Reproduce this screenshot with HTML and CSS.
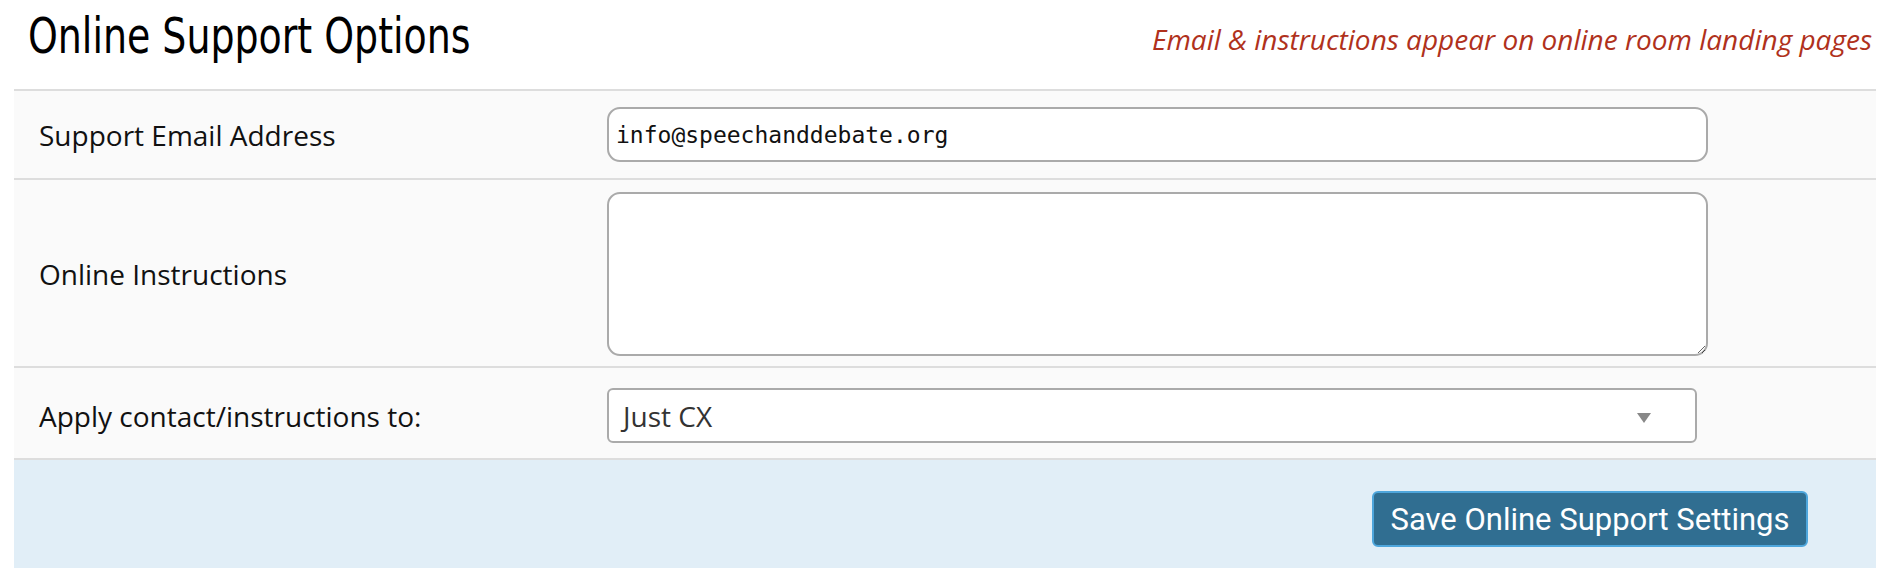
FILE: index.html
```html
<!DOCTYPE html>
<html>
<head>
<meta charset="utf-8">
<link rel="stylesheet" href="styles.css">
</head>
<body>
<div class="page">
  <div class="header">
    <h2 class="title">Online Support Options</h2>
    <span class="note">Email &amp; instructions appear on online room landing pages</span>
  </div>
  <div class="rows">
    <div class="row row-email">
      <label class="label">Support Email Address</label>
      <div class="field"><input class="text-input" type="text" value="info@speechanddebate.org"></div>
    </div>
    <div class="row row-instr">
      <label class="label">Online Instructions</label>
      <div class="field"><textarea class="textarea"></textarea></div>
    </div>
    <div class="row row-apply">
      <label class="label">Apply contact/instructions to:</label>
      <div class="field">
        <div class="select">
          <span class="select-value">Just CX</span>
          <span class="caret"></span>
        </div>
      </div>
    </div>
  </div>
  <div class="actions">
    <button class="save-btn" type="button">Save Online Support Settings</button>
  </div>
</div>
</body>
</html>
```

FILE: styles.css
```css
html, body {
  margin: 0;
  padding: 0;
  background: #ffffff;
}

.page {
  margin: 0 18px 0 14px;
  height: 568px;
  display: flex;
  flex-direction: column;
}

.header {
  display: flex;
  justify-content: space-between;
  align-items: baseline;
  height: 89px;
  padding: 0 4px 0 14px;
  box-sizing: border-box;
}

.title {
  margin: 0;
  font-family: "DejaVu Sans Condensed", "Roboto", sans-serif;
  font-weight: normal;
  font-size: 49px;
  line-height: 74px;
  color: #000;
  transform: scaleX(0.86);
  transform-origin: left center;
  white-space: nowrap;
}

.note {
  font-family: "Open Sans", sans-serif;
  font-style: italic;
  font-size: 28px;
  color: #b0311c;
  position: relative;
  top: -3px;
}

.rows {
  border-top: 2px solid #dddddd;
}

.row {
  display: grid;
  grid-template-columns: 593px 1fr;
  align-items: center;
  background: #fafafa;
  border-bottom: 2px solid #dddddd;
}

.row-email { padding: 16px 0 16px; }
.row-instr { padding: 12px 0 10px; }
.row-apply { padding: 20px 0 15px; }

.label {
  padding-left: 25px;
  font-family: "Open Sans", sans-serif;
  font-size: 28px;
  color: #111;
}

.text-input {
  box-sizing: border-box;
  width: 1101px;
  height: 55px;
  border: 2px solid #aaaaaa;
  border-radius: 13px;
  padding: 0 0 0 7px;
  font-family: "DejaVu Sans Mono", monospace;
  font-size: 23px;
  color: #111;
  background: #fff;
  outline: none;
}

.textarea {
  display: block;
  box-sizing: border-box;
  width: 1101px;
  height: 164px;
  border: 2px solid #aaaaaa;
  border-radius: 13px;
  background: #fff;
  outline: none;
  resize: both;
}

.select {
  box-sizing: border-box;
  width: 1090px;
  height: 55px;
  border: 2px solid #aaaaaa;
  border-radius: 6px;
  background: #fff;
  display: flex;
  align-items: center;
  justify-content: space-between;
  padding: 0 44px 0 14px;
}

.select-value {
  font-family: "Open Sans", sans-serif;
  font-size: 28px;
  color: #333;
}

.caret {
  width: 0;
  height: 0;
  border-left: 7px solid transparent;
  border-right: 7px solid transparent;
  border-top: 10px solid #888;
  margin-top: 4px;
}

.actions {
  flex: 1;
  background: #e1eef7;
  display: flex;
  justify-content: flex-end;
  align-items: flex-start;
  padding: 31px 68px 0 0;
}

.save-btn {
  box-sizing: border-box;
  height: 56px;
  width: 436px;
  background: #306e91;
  border: 2px solid #4ea6dc;
  border-radius: 6px;
  color: #ffffff;
  font-family: "Roboto", "Liberation Sans", sans-serif;
  font-size: 31px;
  padding: 0;
  cursor: pointer;
}
```
